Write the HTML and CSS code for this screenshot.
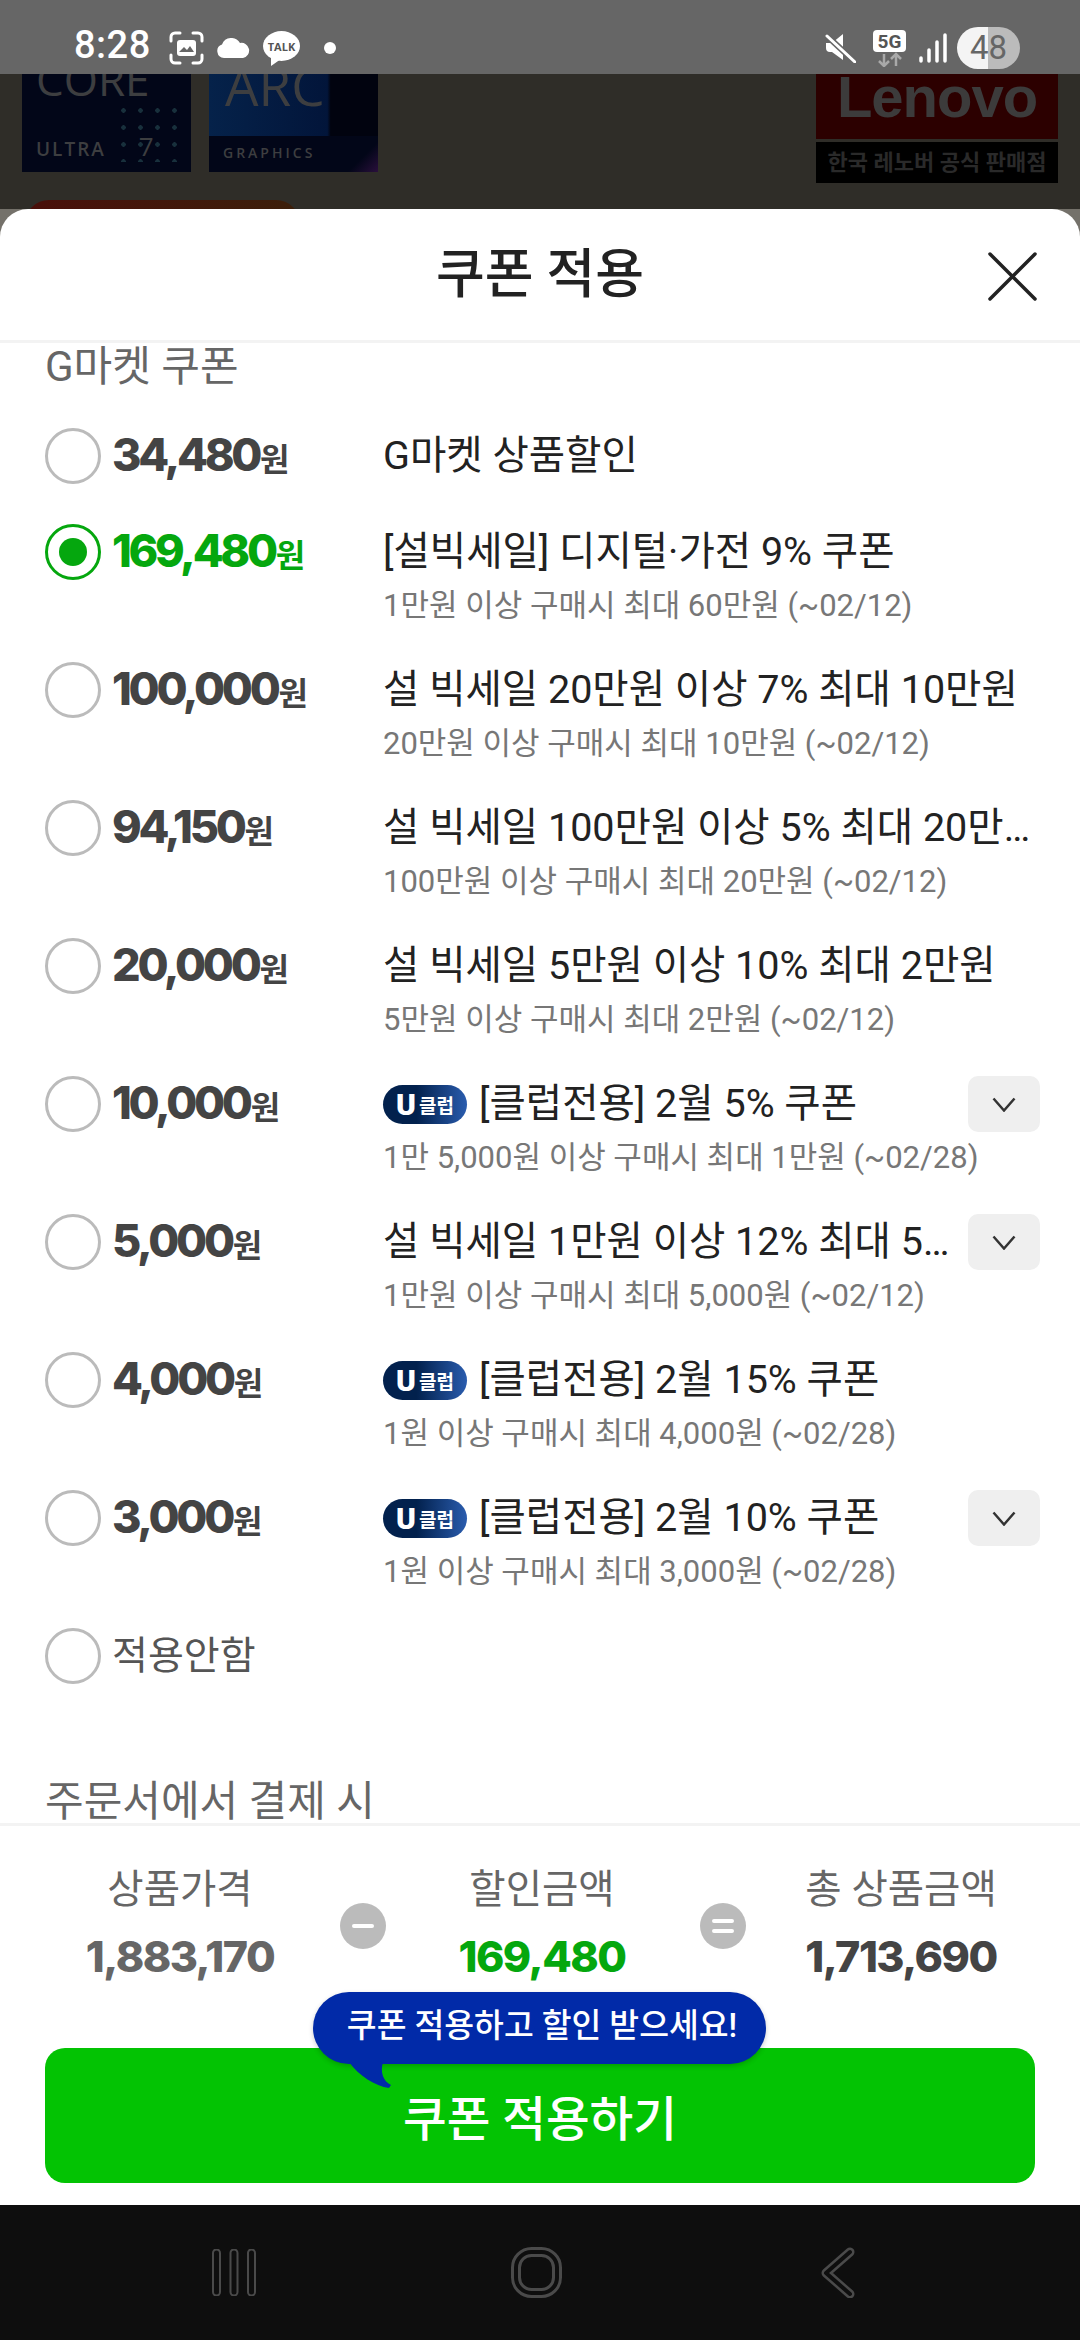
FILE: index.html
```html
<!DOCTYPE html>
<html lang="ko">
<head>
    <meta charset="UTF-8">
    <meta name="viewport" content="width=device-width, initial-scale=1.0">
    <title>쿠폰 적용</title>
    <link rel="stylesheet" href="styles.css">
</head>
<body>
    <div class="status-bar">
        <div class="status-left">
            <span class="clock">8:28</span>
            <svg width="35" height="34" viewBox="0 0 35 34" fill="none">
                <path d="M2 10V6a4 4 0 0 1 4-4h5M24 2h5a4 4 0 0 1 4 4v4M33 24v4a4 4 0 0 1-4 4h-5M11 32H6a4 4 0 0 1-4-4v-4" stroke="#fff" stroke-width="3" stroke-linecap="round"/>
                <rect x="8" y="9" width="19" height="16" rx="3" fill="#fff"/>
                <path d="M10 21l5-5 3 3 3-4 4 6z" fill="#666"/>
            </svg>
            <svg width="35" height="20" viewBox="0 0 35 20"><path d="M8 20a7 7 0 0 1-2-13.600A10 10 0 0 1 24 5a7.500 7.500 0 0 1 3 15z" fill="#fff"/></svg>
            <svg width="37" height="35" viewBox="0 0 37 35">
                <ellipse cx="18.500" cy="15" rx="18.500" ry="15" fill="#fff"/>
                <path d="M8 25l0 10 10-7z" fill="#fff"/>
                <text x="18.500" y="19.500" text-anchor="middle" class="talk-text">TALK</text>
            </svg>
            <span class="status-dot"></span>
        </div>
        <div class="status-right">
            <svg class="mute-icon" width="31" height="30" viewBox="0 0 31 30">
                <path d="M1 10h6l11-9v26l-11-8H5a4 4 0 0 1-4-4z" fill="#fff"/>
                <path d="M1 2l29 27" stroke="#666" stroke-width="6"/>
                <path d="M2 3l28 26" stroke="#fff" stroke-width="3" stroke-linecap="round"/>
            </svg>
            <svg width="33" height="37" viewBox="0 0 33 37">
                <rect width="33" height="22" rx="4" fill="#fff"/>
                <text x="16.500" y="18" text-anchor="middle" class="fiveg-text">5G</text>
                <path d="M11 24v12M6 31l5 5 5-5M23 36V24M18 29l5-5 5 5" fill="none" stroke="#a9a9a9" stroke-width="2.500"/>
            </svg>
            <svg width="28" height="30" viewBox="0 0 28 30">
                <path d="M2 25v3M10 17v11M18 9v19M26 2v26" stroke="#fff" stroke-width="3.500" stroke-linecap="round"/>
            </svg>
            <div class="battery">48</div>
        </div>
    </div>

    <div class="backdrop">
        <div class="backdrop-left">
            <div class="badges">
                <div class="chip-badge core">
                    <span class="chip-name">CORE</span>
                    <span class="chip-sub">ULTRA <b>7</b></span>
                </div>
                <div class="chip-badge arc">
                    <span class="chip-name">ARC</span>
                    <span class="chip-sub small">GRAPHICS</span>
                </div>
            </div>
            <div class="red-pill"></div>
        </div>
        <div class="lenovo">
            <div class="lenovo-logo">Lenovo</div>
            <div class="lenovo-label">한국 레노버 공식 판매점</div>
        </div>
    </div>

    <div class="sheet-wrap">
        <div class="sheet">
            <div class="sheet-header">
                <h1>쿠폰 적용</h1>
                <svg class="close-icon" width="49" height="49" viewBox="0 0 49 49">
                    <path d="M2 2l45 45M47 2L2 47" stroke="#222" stroke-width="3.500" stroke-linecap="round"/>
                </svg>
            </div>

            <div class="coupons">
                <h2 class="group-title">G마켓 쿠폰</h2>

                <div class="row single">
                    <span class="radio"></span>
                    <div class="price">34,480<small>원</small></div>
                    <div class="info"><div class="title-line"><span class="title">G마켓 상품할인</span></div></div>
                </div>

                <div class="row on">
                    <span class="radio"></span>
                    <div class="price">169,480<small>원</small></div>
                    <div class="info">
                        <div class="title-line"><span class="title">[설빅세일] 디지털·가전 9% 쿠폰</span></div>
                        <div class="sub">1만원 이상 구매시 최대 60만원 (~02/12)</div>
                    </div>
                </div>

                <div class="row">
                    <span class="radio"></span>
                    <div class="price">100,000<small>원</small></div>
                    <div class="info">
                        <div class="title-line"><span class="title">설 빅세일 20만원 이상 7% 최대 10만원</span></div>
                        <div class="sub">20만원 이상 구매시 최대 10만원 (~02/12)</div>
                    </div>
                </div>

                <div class="row">
                    <span class="radio"></span>
                    <div class="price">94,150<small>원</small></div>
                    <div class="info">
                        <div class="title-line"><span class="title">설 빅세일 100만원 이상 5% 최대 20만원</span></div>
                        <div class="sub">100만원 이상 구매시 최대 20만원 (~02/12)</div>
                    </div>
                </div>

                <div class="row">
                    <span class="radio"></span>
                    <div class="price">20,000<small>원</small></div>
                    <div class="info">
                        <div class="title-line"><span class="title">설 빅세일 5만원 이상 10% 최대 2만원</span></div>
                        <div class="sub">5만원 이상 구매시 최대 2만원 (~02/12)</div>
                    </div>
                </div>

                <div class="row">
                    <span class="radio"></span>
                    <div class="price">10,000<small>원</small></div>
                    <div class="info">
                        <div class="title-line">
                            <span class="uclub"><b>U</b>클럽</span>
                            <span class="title">[클럽전용] 2월 5% 쿠폰</span>
                            <span class="more"><svg width="24" height="15" viewBox="0 0 24 15"><path d="M1.500 1.500L12 13.500 22.500 1.500" fill="none" stroke="#333" stroke-width="2.500"/></svg></span>
                        </div>
                        <div class="sub">1만 5,000원 이상 구매시 최대 1만원 (~02/28)</div>
                    </div>
                </div>

                <div class="row">
                    <span class="radio"></span>
                    <div class="price">5,000<small>원</small></div>
                    <div class="info">
                        <div class="title-line">
                            <span class="title">설 빅세일 1만원 이상 12% 최대 5,000원</span>
                            <span class="more"><svg width="24" height="15" viewBox="0 0 24 15"><path d="M1.500 1.500L12 13.500 22.500 1.500" fill="none" stroke="#333" stroke-width="2.500"/></svg></span>
                        </div>
                        <div class="sub">1만원 이상 구매시 최대 5,000원 (~02/12)</div>
                    </div>
                </div>

                <div class="row">
                    <span class="radio"></span>
                    <div class="price">4,000<small>원</small></div>
                    <div class="info">
                        <div class="title-line">
                            <span class="uclub"><b>U</b>클럽</span>
                            <span class="title">[클럽전용] 2월 15% 쿠폰</span>
                        </div>
                        <div class="sub">1원 이상 구매시 최대 4,000원 (~02/28)</div>
                    </div>
                </div>

                <div class="row">
                    <span class="radio"></span>
                    <div class="price">3,000<small>원</small></div>
                    <div class="info">
                        <div class="title-line">
                            <span class="uclub"><b>U</b>클럽</span>
                            <span class="title">[클럽전용] 2월 10% 쿠폰</span>
                            <span class="more"><svg width="24" height="15" viewBox="0 0 24 15"><path d="M1.500 1.500L12 13.500 22.500 1.500" fill="none" stroke="#333" stroke-width="2.500"/></svg></span>
                        </div>
                        <div class="sub">1원 이상 구매시 최대 3,000원 (~02/28)</div>
                    </div>
                </div>

                <div class="row single none">
                    <span class="radio"></span>
                    <div class="none-label">적용안함</div>
                </div>

                <h2 class="group-title later">주문서에서 결제 시</h2>
            </div>

            <div class="summary">
                <div class="sum-col first">
                    <div class="sum-label">상품가격</div>
                    <div class="sum-value grey">1,883,170</div>
                </div>
                <span class="op"><svg width="22" height="14" viewBox="0 0 22 14"><path d="M2 7h18" stroke="#fff" stroke-width="4" stroke-linecap="round"/></svg></span>
                <div class="sum-col mid">
                    <div class="sum-label">할인금액</div>
                    <div class="sum-value green">169,480</div>
                </div>
                <span class="op"><svg width="22" height="14" viewBox="0 0 22 14"><path d="M2 2h18M2 12h18" stroke="#fff" stroke-width="4" stroke-linecap="round"/></svg></span>
                <div class="sum-col last">
                    <div class="sum-label">총 상품금액</div>
                    <div class="sum-value">1,713,690</div>
                </div>
            </div>

            <div class="apply-wrap">
                <div class="bubble">
                    쿠폰 적용하고 할인 받으세요!
                    <svg class="bubble-tail" width="44" height="26" viewBox="0 0 44 26"><path d="M0 0h34c-3 10 0 19 8 23l-2 3C26 24 10 14 0 0z" fill="#012aa8"/></svg>
                </div>
                <button class="apply" type="button">쿠폰 적용하기</button>
            </div>
        </div>
    </div>

    <div class="nav-bar">
        <span class="nav-item">
            <svg width="44" height="47" viewBox="0 0 44 47" fill="none">
                <path d="M4.500 4v39M22 4v39M39.500 4v39" stroke="#4a4a4a" stroke-width="9" stroke-linecap="round"/>
                <path d="M4.500 4v39M22 4v39M39.500 4v39" stroke="#0e0e0e" stroke-width="5" stroke-linecap="round"/>
            </svg>
        </span>
        <span class="nav-item">
            <svg width="51" height="51" viewBox="0 0 51 51" fill="none">
                <rect x="1.500" y="1.500" width="48" height="48" rx="19" stroke="#4a4a4a" stroke-width="3"/>
                <rect x="8.500" y="8.500" width="34" height="34" rx="12" stroke="#4a4a4a" stroke-width="3"/>
            </svg>
        </span>
        <span class="nav-item">
            <svg width="34" height="51" viewBox="0 0 34 51" fill="none">
                <path d="M29 5L5 26l24 21" stroke="#4a4a4a" stroke-width="9" stroke-linecap="round" stroke-linejoin="round"/>
                <path d="M29 5L5 26l24 21" stroke="#0e0e0e" stroke-width="4" stroke-linecap="round" stroke-linejoin="round"/>
            </svg>
        </span>
    </div>
</body>
</html>
```

FILE: styles.css
```css
* {
    box-sizing: border-box;
}

html, body {
    margin: 0;
    padding: 0;
}

body {
    width: 1080px;
    height: 2340px;
    display: flex;
    flex-direction: column;
    overflow: hidden;
    background: #fff;
    font-family: Roboto, "Noto Sans CJK KR", sans-serif;
}

/* status bar */
.status-bar {
    height: 74px;
    flex: none;
    display: flex;
    justify-content: space-between;
    align-items: center;
    padding: 22px 60px 0 74px;
    background: #666;
}

.status-left, .status-right {
    display: flex;
    align-items: center;
}

.status-left svg {
    margin-left: 12px;
}

.status-left svg:first-of-type {
    margin-left: 18px;
}

.clock {
    margin-bottom: 6px;
    font-size: 38px;
    line-height: 44px;
    font-weight: 500;
    color: #fff;
    letter-spacing: 0.500px;
}

.status-dot {
    width: 12px;
    height: 12px;
    margin-left: 24px;
    border-radius: 50%;
    background: #fff;
}

.talk-text {
    font-family: "Open Sans", sans-serif;
    font-size: 11px;
    font-weight: 700;
    fill: #555;
}

.fiveg-text {
    font-family: Roboto, sans-serif;
    font-size: 19px;
    font-weight: 700;
    fill: #555;
}

.status-right svg {
    margin-right: 13px;
}

.status-right .mute-icon {
    margin-right: 17px;
}

.battery {
    width: 63px;
    height: 42px;
    border-radius: 21px;
    margin-left: -3px;
    background: linear-gradient(to right, #f4f4f4 50%, #bbb 50%);
    color: #666;
    font-size: 33px;
    line-height: 42px;
    text-align: center;
}

/* dimmed page behind the sheet */
.backdrop {
    height: 135px;
    flex: none;
    display: flex;
    justify-content: space-between;
    padding: 0 22px;
    overflow: hidden;
    background: #2f2d28;
}

.badges {
    display: flex;
    gap: 18px;
}

.chip-badge {
    position: relative;
    width: 169px;
    height: 98px;
    padding: 0 14px;
    overflow: hidden;
    display: flex;
    flex-direction: column;
    justify-content: space-between;
    color: #3d3e40;
    font-family: "Open Sans", sans-serif;
}

.core {
    background: #020618;
}

/* dot pattern on the core badge */
.core::after {
    content: "";
    position: absolute;
    right: 8px;
    top: 28px;
    width: 68px;
    height: 60px;
    background: radial-gradient(circle, #18303c 2px, transparent 2.500px) 0 0 / 17px 17px;
}

.arc {
    background:
        linear-gradient(135deg, transparent 60%, #2a0f3c 100%) right bottom / 38px 38px no-repeat,
        linear-gradient(to right, #05224a, #02153a 70%, #01030f 72%) top / 100% 62px no-repeat,
        #020618;
}

.chip-name {
    font-size: 44px;
    line-height: 30px;
}

.core .chip-name {
    margin-top: -10px;
}

.arc .chip-name {
    margin-top: -6px;
    margin-left: 2px;
    line-height: 36px;
    font-size: 53px;
}

.chip-sub {
    margin-bottom: 12px;
    font-size: 19px;
    font-weight: 600;
    letter-spacing: 2px;
    line-height: 22px;
}

.chip-sub b {
    margin-left: 26px;
    font-size: 26px;
    font-weight: 400;
}

.chip-sub.small {
    font-size: 14px;
    letter-spacing: 3px;
    margin-bottom: 8px;
}

.red-pill {
    width: 275px;
    height: 24px;
    margin: 28px 0 0 3px;
    border-radius: 24px 24px 0 0;
    background: linear-gradient(to right, #4a0f0a, #3c1f0a);
}

.lenovo {
    width: 242px;
}

.lenovo-logo {
    height: 65px;
    background: #2c0000;
    color: #3c3b3b;
    font-family: "Liberation Sans", sans-serif;
    font-size: 58px;
    font-weight: 700;
    line-height: 46px;
    text-align: center;
    overflow: hidden;
    letter-spacing: -1px;
}

.lenovo-label {
    height: 41px;
    margin-top: 3px;
    background: #000;
    color: #2a2a2a;
    font-size: 22px;
    font-weight: 700;
    line-height: 41px;
    text-align: center;
    white-space: nowrap;
}

/* sheet */
.sheet-wrap {
    flex: 1;
    min-height: 0;
    background: #74716a;
}

.sheet {
    height: 100%;
    display: flex;
    flex-direction: column;
    background: #fff;
    border-radius: 28px 28px 0 0;
}

.sheet-header {
    position: relative;
    height: 134px;
    flex: none;
    display: flex;
    justify-content: center;
    align-items: center;
    padding-bottom: 10px;
    border-bottom: 3px solid #f3f3f3;
}

.sheet-header h1 {
    margin: 0;
    font-size: 53px;
    font-weight: 500;
    color: #222;
}

.close-icon {
    position: absolute;
    right: 43px;
    top: 43px;
}

.coupons {
    flex: 1;
    min-height: 0;
    overflow: hidden;
    padding: 0 40px 0 45px;
}

.group-title {
    margin: 0;
    font-size: 42px;
    font-weight: 400;
    line-height: 40px;
    color: #666;
}

.coupons > .group-title:first-child {
    padding-top: 4px;
    margin-bottom: 41px;
}

.group-title.later {
    margin-top: 98px;
}

.row {
    display: grid;
    grid-template-columns: 67px 271px minmax(0, 1fr);
    height: 103px;
    margin-bottom: 35px;
}

.row.single {
    height: 56px;
    margin-bottom: 40px;
}

.radio {
    width: 56px;
    height: 56px;
    border: 3px solid #bbb;
    border-radius: 50%;
    display: flex;
    align-items: center;
    justify-content: center;
}

.on .radio {
    border-color: #05a70e;
}

.on .radio::after {
    content: "";
    width: 28px;
    height: 28px;
    border-radius: 50%;
    background: #05a70e;
}

.price {
    margin-top: -1px;
    font-family: Inter, sans-serif;
    font-size: 45px;
    font-weight: 800;
    letter-spacing: -3.300px;
    line-height: 56px;
    color: #444;
    white-space: nowrap;
}

.price small {
    margin-left: 1px;
    font-family: "Noto Sans CJK KR", sans-serif;
    font-size: 32px;
    font-weight: 700;
    letter-spacing: 0;
}

.on .price {
    color: #05a70e;
}

.title-line {
    display: flex;
    align-items: center;
    height: 56px;
}

.title {
    flex: 1;
    min-width: 0;
    margin-bottom: 2px;
    padding-right: 8px;
    font-size: 39.500px;
    line-height: 51px;
    color: #222;
    white-space: nowrap;
    overflow: hidden;
    text-overflow: ellipsis;
}

.sub {
    margin-top: 5px;
    font-size: 31px;
    line-height: 42px;
    color: #777;
    white-space: nowrap;
}

.none-label {
    font-size: 39px;
    line-height: 56px;
    color: #555;
}

.uclub {
    flex: none;
    width: 84px;
    height: 39px;
    margin-right: 12px;
    border-radius: 20px;
    background: linear-gradient(to right, #02214d 40%, #2a5cae);
    color: #fff;
    font-size: 19px;
    font-weight: 700;
    line-height: 39px;
    text-align: center;
    white-space: nowrap;
}

.uclub b {
    font-size: 30px;
    margin-right: 3px;
    vertical-align: -2px;
}

.more {
    flex: none;
    width: 72px;
    height: 56px;
    margin-left: 8px;
    border-radius: 10px;
    background: #efefef;
    display: flex;
    align-items: center;
    justify-content: center;
}

/* price summary */
.summary {
    flex: none;
    height: 169px;
    display: grid;
    grid-template-columns: 320px 46px 314px 46px 1fr;
    align-items: start;
    border-top: 3px solid #f3f3f3;
    padding: 36px 0 0 20px;
}

.sum-col {
    text-align: center;
}

.sum-col.mid {
    padding-right: 2px;
}

.sum-col.last {
    padding-right: 24px;
}

.sum-label {
    font-size: 39.500px;
    line-height: 56px;
    color: #666;
}

.sum-value {
    margin-top: 13px;
    font-family: Inter, sans-serif;
    font-size: 43px;
    font-weight: 800;
    letter-spacing: -1.500px;
    line-height: 50px;
    color: #444;
}

.sum-value.grey {
    color: #666;
}

.sum-value.green {
    color: #05a70e;
}

.op {
    width: 46px;
    height: 46px;
    margin-top: 41px;
    border-radius: 50%;
    background: #bbb;
    display: flex;
    align-items: center;
    justify-content: center;
}

/* apply button */
.apply-wrap {
    position: relative;
    flex: none;
    padding: 56px 45px 22px;
}

.apply {
    display: block;
    width: 100%;
    height: 135px;
    border: none;
    border-radius: 20px;
    background: #03c303;
    color: #fff;
    font-family: Roboto, "Noto Sans CJK KR", sans-serif;
    font-size: 47.500px;
    font-weight: 500;
}

.bubble {
    position: absolute;
    left: 313px;
    top: 0;
    width: 453px;
    height: 72px;
    padding-left: 5px;
    border-radius: 36px;
    background: #012aa8;
    box-shadow: 0 2px 5px rgba(0,0,0,0.2);
    color: #fff;
    font-size: 32.400px;
    font-weight: 500;
    line-height: 68px;
    text-align: center;
    white-space: nowrap;
}

.bubble-tail {
    position: absolute;
    left: 36px;
    top: 70px;
}

/* android nav */
.nav-bar {
    height: 135px;
    flex: none;
    display: flex;
    justify-content: center;
    align-items: center;
    padding-right: 8px;
    background: #0e0e0e;
}

.nav-item {
    width: 302px;
    display: flex;
    justify-content: center;
}
```
